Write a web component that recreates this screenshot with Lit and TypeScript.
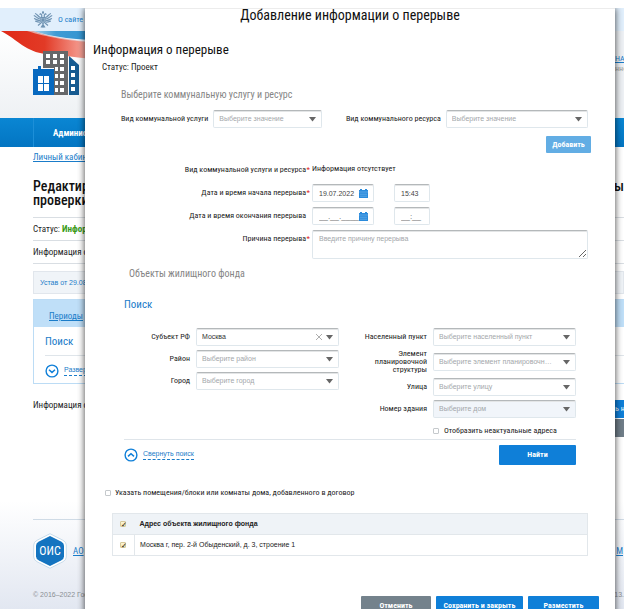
import { LitElement, html, css, svg, nothing } from "lit";
import { customElement, property } from "lit/decorators.js";

const condensed = css`"Roboto Condensed", "Liberation Sans Narrow", Roboto, sans-serif`;
const plain = css`"Liberation Sans", sans-serif`;

/** Drop-down with a small arrow and an optional clear mark. */
@customElement("pick-box")
class PickBox extends LitElement {
  @property() label = "";
  @property() value = "";
  @property({ type: Boolean }) filled = false;
  @property({ type: Boolean }) disabled = false;

  static styles = css`
    :host { display: grid; min-width: 0; }
    select {
      grid-area: 1 / 1; appearance: none; box-sizing: border-box; width: 100%; min-width: 0; height: 18px;
      margin: 0; padding: 0 20px 0 5px; border: 1px solid #dfe7ec; border-top: 1px solid #b4b8ba;
      border-radius: 2px; background: #fff; box-shadow: inset 0 1px 0 #e3e5e6;
      font: 7px/14px ${plain}; color: #a3a7aa; text-overflow: ellipsis; white-space: nowrap; overflow: hidden;
    }
    select.filled { color: #333; }
    select:disabled { background: #f1f5fa; opacity: 1; }
    svg { grid-area: 1 / 1; justify-self: end; align-self: center; margin-right: 4px; pointer-events: none; z-index: 1; }
  `;

  render() {
    return html`
      <select aria-label=${this.label} class=${this.filled ? "filled" : ""} ?disabled=${this.disabled}>
        <option>${this.value}</option>
      </select>
      <svg width="20" height="8" viewBox="0 0 20 8" aria-hidden="true">
        ${this.filled ? svg`<path d="M1 1l6 6M7 1l-6 6" stroke="#999" stroke-width="0.8" fill="none" />` : nothing}
        <path d="M11 2h7l-3.500 4.500z" fill="#666" />
      </svg>`;
  }
}

const calendar = html`<svg class="cal" width="9" height="9" viewBox="0 0 9 9" aria-hidden="true">
  <path d="M0 1h9v8H0z" fill="#2a8bdc" /><path d="M1 0h2v1H1zM6 0h2v1H6z" fill="#2a8bdc" />
  <path d="M0 3h9M1 5.2h7M1 7.2h7" stroke="#8cc3f0" stroke-width="0.5" /></svg>`;

const chevron = (up: boolean) => html`<svg width="14" height="14" viewBox="0 0 14 14" fill="none" stroke="#0f7fd8" aria-hidden="true">
  <circle cx="7" cy="7" r="5.9" stroke-width="1.4" />
  <path d=${up ? "M4 8.4l3-2.6 3 2.6" : "M4 5.8l3 2.6 3-2.6"} stroke-width="1.5" /></svg>`;

const eagle = html`<svg width="20" height="18" viewBox="0 0 20 18" fill="none" stroke="#6f93b3" stroke-width="1.2" aria-hidden="true">
  <path d="M9 1.500h2M10 0v3M6.500 3.500l1.200-.8 1 1.300v3M13.500 3.500l-1.200-.8-1 1.300v3" />
  <path d="M7.500 6.500C5 6 4.500 3 2 2.500M7 8C3.500 7.500 3 5 .8 4.500M7 9.500C4 9.500 3 8 1 7.500M7.200 11c-2 .3-3.500-.4-5-1M12.500 6.500C15 6 15.500 3 18 2.500M13 8c3.500-.5 4-3 6.200-3.500M13 9.500c3 0 4-1.500 6-2M12.800 11c2 .3 3.500-.4 5-1" />
  <path d="M7.800 6.500h4.400v4.200L10 12.500l-2.200-1.800zM8 12l-3 2.500M12 12l3 2.500M10 12.500V17M8 16.500l2-3 2 3" />
  <path d="M9 7.800h2v2.400H9z" fill="#6f93b3" /></svg>`;

const houses = html`<svg width="46" height="46" viewBox="0 0 46 46" aria-hidden="true">
  <path d="M36 6l10 9v30H36z" fill="#175b91" />
  <path d="M38 16h4v4h-4zM38 23h4v4h-4zM38 30h4v4h-4zM38 37h4v4h-4z" fill="#fff" />
  <path d="M10 1h25v44H21V18H10z" fill="#666769" />
  <path d="M13 4h4v4h-4zM20 4h4v4h-4zM27 4h4v4h-4zM13 10h4v4h-4zM20 10h4v4h-4zM27 10h4v4h-4zM27 17h4v4h-4zM27 24h4v4h-4zM27 31h4v4h-4zM27 38h4v4h-4zM22 17h3v4h-3zM22 24h3v4h-3zM22 31h3v4h-3zM22 38h3v4h-3z" fill="#fff" />
  <path d="M0 19h5v-3h3v3h13v26H0z" fill="#0869bf" />
  <path d="M5 26h5v7H5zM11 26h5v7h-5zM5 34h5v7H5zM11 34h5v7h-5z" fill="#fff" /></svg>`;

@customElement("app-root")
class AppRoot extends LitElement {
  static styles = css`
    :host {
      display: grid; grid-template: minmax(0, 1fr) / minmax(0, 1fr); box-sizing: border-box; height: 100vh; padding-top: 8px;
      overflow: hidden; background: #fff; color: #222; font: 9px/10px ${condensed};
    }
    * { box-sizing: border-box; }
    h1, h2, h3, h4, p { margin: 0; font-weight: 400; }
    a { color: #1a7cc9; }

    .site { grid-area: 1 / 1; display: flex; flex-direction: column; overflow: hidden; white-space: nowrap; }
    .split { display: flex; justify-content: space-between; }
    .top { display: flex; align-items: center; gap: 5px; flex: none; height: 23px; padding-left: 33px; background: #e1effc; }
    .top a { text-decoration: none; font-size: 8px; }
    .brand { display: grid; flex: none; height: 87px; background: linear-gradient(#fff, #eef1f4); overflow: hidden; }
    .brand > * { grid-area: 1 / 1; }
    .brand .logo { padding: 19px 0 0 33px; }
    .contact { justify-self: end; width: 9px; padding-top: 23px; overflow: hidden; background: #edf0f4; font-size: 8px; }
    .contact p { color: #999; }
    nav { display: flex; flex: none; align-items: center; height: 29px; padding-left: 33px; background: linear-gradient(#0a86d3, #0375c2); }
    nav a { display: flex; align-items: center; height: 100%; padding-left: 19px; border-left: 1px solid #1d8fd8; color: #fff; font-weight: 700; text-decoration: none; }
    .content { flex: none; padding-left: 33px; }
    .crumb { padding: 5px 0; }
    .name { margin: 12px 0 10px; color: #111; font-size: 14px; line-height: 14px; font-weight: 500; }
    .line { height: 23px; line-height: 22px; border-top: 1px solid #d9dee3; }
    .green { color: #3a9a16; }
    .charter { height: 23px; margin-bottom: 5px; padding-left: 6px; border: 1px solid #e1e6ec; background: #f0f4f8; color: #1a7cc9; font: 7px/21px ${plain}; }
    .last { height: 8px; border-top: 1px solid #d9dee3; }
    .panel { height: 85px; border: 1px solid #bcdcf5; border-right: 0; }
    .tab { height: 27px; padding: 11px 0 0 15px; background: #bfdff8; }
    .panel h3 { margin: 9px 0 7px 11px; color: #1a7cc9; font-size: 11px; line-height: 12px; }
    .fold { display: flex; align-items: center; gap: 5px; }
    .fold button { padding: 0 0 1px; border: 0; border-bottom: 1px dashed #1a7cc9; background: none; color: #1a7cc9; font: 7px/8px ${plain}; }
    .panel .fold { margin-left: 11px; padding-top: 8px; border-top: 1px solid #dfe5ea; }
    .after { padding-top: 16px; }
    .side { width: 9px; }
    .side span { display: block; height: 18px; overflow: hidden; background: #0f7fd8; color: #fff; font-size: 8px; line-height: 18px; }
    .side span + span { margin-top: 1px; background: #6f7d88; }
    footer { flex: 1; display: flex; flex-direction: column; margin-top: 64px; padding: 18px 0 0 33px; background: linear-gradient(#fff, #e2e7f1); color: #8a8f94; }
    .ois { display: flex; align-items: center; gap: 6px; padding-top: 13px; border-top: 1px solid #cfdbe6; }
    .ois a:last-child { margin-left: auto; margin-right: 1px; }
    .copy { padding-top: 18px; font: 7px/16px ${plain}; }

    .modal {
      grid-area: 1 / 1; z-index: 1; align-self: start; min-height: 100%; margin: 0 9px 0 85px; padding: 0 27px 14px 0; background: #fff;
      box-shadow: 0 0 7px rgba(0, 0, 0, 0.75), inset 0 1px 0 #ececec; clip-path: inset(0 -8px); font-size: 8px;
    }
    .modal h1 { margin-right: -27px; text-align: center; font-size: 14px; line-height: 14px; color: #111; }
    .modal h2 { margin: 21px 0 5px 8px; font-size: 13px; line-height: 14px; color: #111; }
    .status { margin-left: 17px; font-size: 9px; }
    .modal h3 { margin: 16px 0 8px 36px; font-size: 10px; line-height: 14px; color: #858585; }
    .service { display: grid; grid-template-columns: auto 110fr auto 144fr; column-gap: 5px; align-items: center; margin-left: 36px; }
    .service label:nth-of-type(2) { margin-left: 19px; }
    .act { height: 17px; border: 0; border-radius: 1px; background: #0f7fd8; color: #fff; font: 700 8px/16px ${condensed}; text-align: center; }
    .add { display: block; width: 45px; margin: 8px -3px 8px auto; padding: 0; background: #62ade4; }
    .facts { display: grid; grid-template-columns: 225px 1fr; gap: 5px 2px; }
    .facts > label, .facts > .lbl { padding-right: 4px; text-align: right; line-height: 18px; }
    .facts > .must { padding-right: 0; }
    .must::after { content: "*"; display: inline-block; width: 4px; color: #e02020; }
    .val { line-height: 16px; }
    .when { display: grid; grid-template-columns: 62px 36px; column-gap: 20px; }
    .date { display: grid; }
    .date > * { grid-area: 1 / 1; }
    .cal { justify-self: end; align-self: center; margin-right: 6px; }
    input.text, textarea {
      width: 100%; height: 18px; margin: 0; padding: 0 6px; border: 1px solid #dfe7ec; border-top: 1px solid #b4b8ba; border-radius: 2px;
      background: #fff; box-shadow: inset 0 1px 0 #e3e5e6; color: #444; font: 7px/14px ${plain};
    }
    textarea { display: block; height: 29px; padding: 4px 6px; line-height: 8px; }
    ::placeholder { color: #a3a7aa; opacity: 1; }
    input.text::placeholder { color: #666; font-size: 8px; }
    .modal h3.objects { margin: 8px 0 17px 44px; }
    .search { margin: 0 12px 0 39px; }
    .search h4 { margin-bottom: 16px; color: #1a7cc9; font-size: 11px; line-height: 14px; }
    .cols { display: grid; grid-template-columns: 1fr 1fr; column-gap: 22px; border-bottom: 1px solid #dfe5ea; }
    .col { display: grid; row-gap: 4px; align-content: start; }
    .field { display: grid; grid-template-columns: 66px minmax(0, 1fr); column-gap: 6px; align-items: center; }
    .field label { text-align: right; line-height: 8px; }
    .check { display: flex; align-items: center; gap: 4px; }
    .col .check { height: 17px; margin-left: 72px; gap: 5px; }
    input[type="checkbox"] { appearance: none; flex: none; display: block; width: 6px; height: 6px; margin: 0; border: 1px solid #c5c9cc; border-radius: 1px; background: #fff; }
    .tools { display: flex; justify-content: space-between; align-items: center; padding: 5px 0 23px; }
    .find { width: 77px; height: 20px; }
    .rooms { margin-left: 20px; }
    table { width: calc(100% - 27px); margin: 15px 0 40px 27px; border-collapse: collapse; font: 7px/8px ${plain}; }
    tr { height: 21px; border: 1px solid #e2e7eb; }
    th, td { padding: 0 5px; text-align: left; }
    thead { background: #eff3f7; }
    td:first-child { border-right: 1px solid #e2e7eb; }
    th:first-child, td:first-child { width: 22px; padding: 0 0 0 7px; }
    table input[type="checkbox"]:checked {
      border-color: #d6c99a; background: linear-gradient(#fdf6d8, #f3e4ae); display: grid; place-items: center;
    }
    table input[type="checkbox"]:checked::before { content: "✓"; color: #111; font: 700 7px/6px "DejaVu Sans", sans-serif; }
    .buttons { display: grid; grid-template-columns: 70px 87px 71px; column-gap: 5px; justify-content: end; margin-right: -11px; }
    .buttons .act { height: 20px; padding: 0; }
    .act.grey { background: #74828c; }
  `;

  private field(label: string, value: string, opt: { filled?: boolean; disabled?: boolean } = {}) {
    return html`<div class="field"><label>${label}</label>
      <pick-box label=${label} value=${value} ?filled=${opt.filled} ?disabled=${opt.disabled}></pick-box></div>`;
  }

  private site() {
    return html`<div class="site">
      <div class="top">${eagle}<a href="#">О сайте</a></div>
      <div class="brand">
        <svg width="110" height="50" viewBox="0 0 110 50" aria-hidden="true">
          <defs>
            <linearGradient id="r"><stop offset="0" stop-color="#e02a18" /><stop offset=".4" stop-color="#e23a26" /><stop offset=".75" stop-color="#f5a095" /><stop offset="1" stop-color="#fbd9d4" /></linearGradient>
            <linearGradient id="b"><stop offset="0" stop-color="#a9d2ea" /><stop offset=".3" stop-color="#3f9bd4" /><stop offset="1" stop-color="#2b8fce" /></linearGradient>
          </defs>
          <path d="M1 0C18 9 26 21 46 23c24 3 40 3 64 9V12C75 10 50 6 34 0z" fill="url(#r)" />
          <path d="M27 0c20 6 40 10 83 13V6C85 5 70 4 55 0z" fill="#e4eff7" opacity=".6" />
          <path d="M33 0c18 6 45 9 77 10V0z" fill="url(#b)" />
        </svg>
        <div class="logo">${houses}</div>
        <div class="contact"><a href="#">НА</a><p>нно</p></div>
      </div>
      <nav><a href="#">Админис</a></nav>
      <div class="content">
        <div class="crumb"><a href="#">Личный кабин</a></div>
        <div class="name split"><span>Редактир<br />проверки</span><span>ы</span></div>
        <p class="line">Статус: <b class="green">Инфор</b></p>
        <p class="line">Информация о</p>
        <div class="last"></div>
        <p class="charter">Устав от 29.08.</p>
        <div class="panel">
          <div class="tab"><a href="#">Периоды</a></div>
          <h3>Поиск</h3>
          <div class="fold">${chevron(false)}<button>Развер</button></div>
        </div>
        <div class="split"><p class="after">Информация о</p><div class="side after"><span>ь н</span><span></span></div></div>
      </div>
      <footer>
        <div class="ois">
          <svg width="34" height="36" viewBox="0 0 34 36" aria-hidden="true">
            <path d="M17 .7l13 6.600q3.300 1.800 3.300 4.700v12q0 2.900-3.300 4.700l-13 6.600-13-6.600q-3.300-1.800-3.300-4.700v-12q0-2.900 3.300-4.700z" fill="#fff" stroke="#c9dceb" />
            <path d="M17 3l11 5.500q3 1.500 3 4v11q0 2.500-3 4L17 33 6 27.500q-3-1.500-3-4v-11q0-2.500 3-4z" fill="#1474c0" />
            <text x="17" y="22" text-anchor="middle" fill="#fff" font-family="Roboto Condensed, Liberation Sans Narrow, Roboto, sans-serif" font-weight="400" font-size="12">ОИС</text>
          </svg>
          <a href="#">АО</a><a href="#">М</a>
        </div>
        <div class="copy split"><span>© 2016–2022 Гос</span><span>13.</span></div>
      </footer>
    </div>`;
  }

  render() {
    return html`${this.site()}
      <main class="modal" role="dialog" aria-labelledby="title">
        <h1 id="title">Добавление информации о перерыве</h1>
        <h2>Информация о перерыве</h2>
        <p class="status">Статус: Проект</p>
        <h3>Выберите коммунальную услугу и ресурс</h3>
        <div class="service">
          <label>Вид коммунальной услуги</label>
          <pick-box label="Вид коммунальной услуги" value="Выберите значение"></pick-box>
          <label>Вид коммунального ресурса</label>
          <pick-box label="Вид коммунального ресурса" value="Выберите значение"></pick-box>
        </div>
        <button class="act add">Добавить</button>
        <div class="facts">
          <span class="lbl must">Вид коммунальной услуги и ресурса</span><span class="val">Информация отсутствует</span>
          <label class="must" for="from">Дата и время начала перерыва</label>
          <div class="when">
            <div class="date"><input class="text" id="from" value="19.07.2022" />${calendar}</div>
            <input class="text" aria-label="Время начала" value="15:43" />
          </div>
          <label for="to">Дата и время окончания перерыва</label>
          <div class="when">
            <div class="date"><input class="text" id="to" placeholder="__.__.____" />${calendar}</div>
            <input class="text" aria-label="Время окончания" placeholder="__:__" />
          </div>
          <label class="must" for="why">Причина перерыва</label>
          <textarea id="why" placeholder="Введите причину перерыва"></textarea>
        </div>
        <h3 class="objects">Объекты жилищного фонда</h3>
        <section class="search">
          <h4>Поиск</h4>
          <div class="cols">
            <div class="col">
              ${this.field("Субъект РФ", "Москва", { filled: true })}
              ${this.field("Район", "Выберите район")}
              ${this.field("Город", "Выберите город")}
            </div>
            <div class="col">
              ${this.field("Населенный пункт", "Выберите населенный пункт")}
              ${this.field("Элемент планировочной структуры", "Выберите элемент планировочной структуры")}
              ${this.field("Улица", "Выберите улицу")}
              ${this.field("Номер здания", "Выберите дом", { disabled: true })}
              <label class="check"><input type="checkbox" />Отобразить неактуальные адреса</label>
            </div>
          </div>
          <div class="tools">
            <div class="fold">${chevron(true)}<button>Свернуть поиск</button></div>
            <button class="act find">Найти</button>
          </div>
        </section>
        <label class="check rooms"><input type="checkbox" />Указать помещения/блоки или комнаты дома, добавленного в договор</label>
        <table>
          <thead><tr><th><input type="checkbox" aria-label="Выбрать все" checked /></th><th>Адрес объекта жилищного фонда</th></tr></thead>
          <tbody><tr><td><input type="checkbox" aria-label="Выбрать адрес" checked /></td><td>Москва г, пер. 2-й Обыденский, д. 3, строение 1</td></tr></tbody>
        </table>
        <div class="buttons">
          <button class="act grey">Отменить</button>
          <button class="act">Сохранить и закрыть</button>
          <button class="act">Разместить</button>
        </div>
      </main>`;
  }
}
